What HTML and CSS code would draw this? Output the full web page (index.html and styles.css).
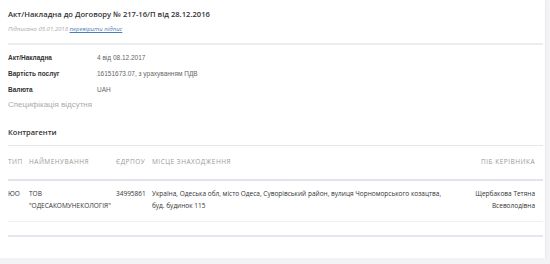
FILE: index.html
```html
<!DOCTYPE html>
<html lang="uk">
<head>
    <meta charset="UTF-8">
    <title>Акт/Накладна</title>
    <link rel="stylesheet" href="styles.css">
</head>
<body>
    <div class="card">
        <h2 class="doc-title">Акт/Накладна до Договору № 217-16/П від 28.12.2016</h2>
        <p class="signed">Підписано 05.01.2018 <a href="#">перевірити підпис</a></p>

        <div class="details">
            <div class="row"><span class="label">Акт/Накладна</span><span class="value">4 від 08.12.2017</span></div>
            <div class="row"><span class="label">Вартість послуг</span><span class="value">16151673.07, з урахуванням ПДВ</span></div>
            <div class="row"><span class="label">Валюта</span><span class="value">UAH</span></div>
            <div class="no-spec">Специфікація відсутня</div>
        </div>

        <h3 class="section-title">Контрагенти</h3>

        <table class="parties">
            <thead>
                <tr>
                    <th class="col-type">Тип</th>
                    <th class="col-name">Найменування</th>
                    <th class="col-code">ЄДРПОУ</th>
                    <th class="col-addr">Місце знаходження</th>
                    <th class="col-head">ПІБ керівника</th>
                </tr>
            </thead>
            <tbody>
                <tr>
                    <td>ЮО</td>
                    <td>ТОВ "ОДЕСАКОМУНЕКОЛОГІЯ"</td>
                    <td>34995861</td>
                    <td>Україна, Одеська обл, місто Одеса, Суворівський район, вулиця Чорноморського козацтва, буд. будинок 115</td>
                    <td class="col-head">Щербакова Тетяна Всеволодівна</td>
                </tr>
                <tr class="empty"><td colspan="5"></td></tr>
            </tbody>
        </table>
    </div>
</body>
</html>
```

FILE: styles.css
```css
body {
    margin: 0;
    padding: 0;
    background: #f3f3f5;
    font-family: 'Open Sans', sans-serif;
    color: #333;
}

.card {
    width: 535px;
    height: 258px;
    padding: 0 2px 0 8px;
    background: #fff;
    box-shadow: 0 0 2px rgba(0, 0, 0, 0.12);
}

.doc-title {
    margin: 0;
    padding-top: 7px;
    font-size: 7.6px;
    line-height: 14px;
    font-weight: 600;
    color: #333;
}

.signed {
    margin: 0;
    padding: 1px 0 7px;
    font-size: 6px;
    line-height: 14px;
    font-style: italic;
    color: #aaa;
    border-bottom: 2px solid #ebebf2;
}

.signed a {
    color: #4a7cc0;
}

.details {
    padding-top: 4px;
    font-family: 'Liberation Sans', Arial, sans-serif;
    font-size: 6.5px;
}

.row {
    display: flex;
    height: 16px;
    align-items: center;
}

.label {
    width: 89px;
    font-weight: bold;
    color: #333;
}

.value {
    color: #666;
}

.no-spec {
    padding-top: 1px;
    font-size: 8px;
    line-height: 14px;
    color: #aaa;
}

.section-title {
    margin: 0;
    padding-top: 13px;
    padding-bottom: 6px;
    font-size: 7.5px;
    line-height: 14px;
    font-weight: 600;
    border-bottom: 1px solid #e6e6ee;
}

.parties {
    width: 535px;
    border-collapse: collapse;
    table-layout: fixed;
    font-size: 6.5px;
}

.parties th {
    padding: 10px 0 12px;
    font-weight: normal;
    text-transform: uppercase;
    letter-spacing: 0.5px;
    color: #999;
    text-align: left;
    border-bottom: 2px solid #e3e3ec;
    line-height: 11px;
}

.parties td {
    padding: 7px 0 9px;
    vertical-align: top;
    line-height: 12px;
    color: #333;
    border-bottom: 1px solid #f0f0f4;
}

.col-type { width: 21px; }
.col-name { width: 87px; }
.col-code { width: 36px; }
.col-addr { width: 318px; }

.parties .col-head {
    padding-right: 8px;
    text-align: right;
}

.parties td:nth-child(4) {
    padding-right: 20px;
}

.parties .empty td {
    height: 13px;
    padding: 0;
    border-bottom: 2px solid #e6e6ee;
}
```
